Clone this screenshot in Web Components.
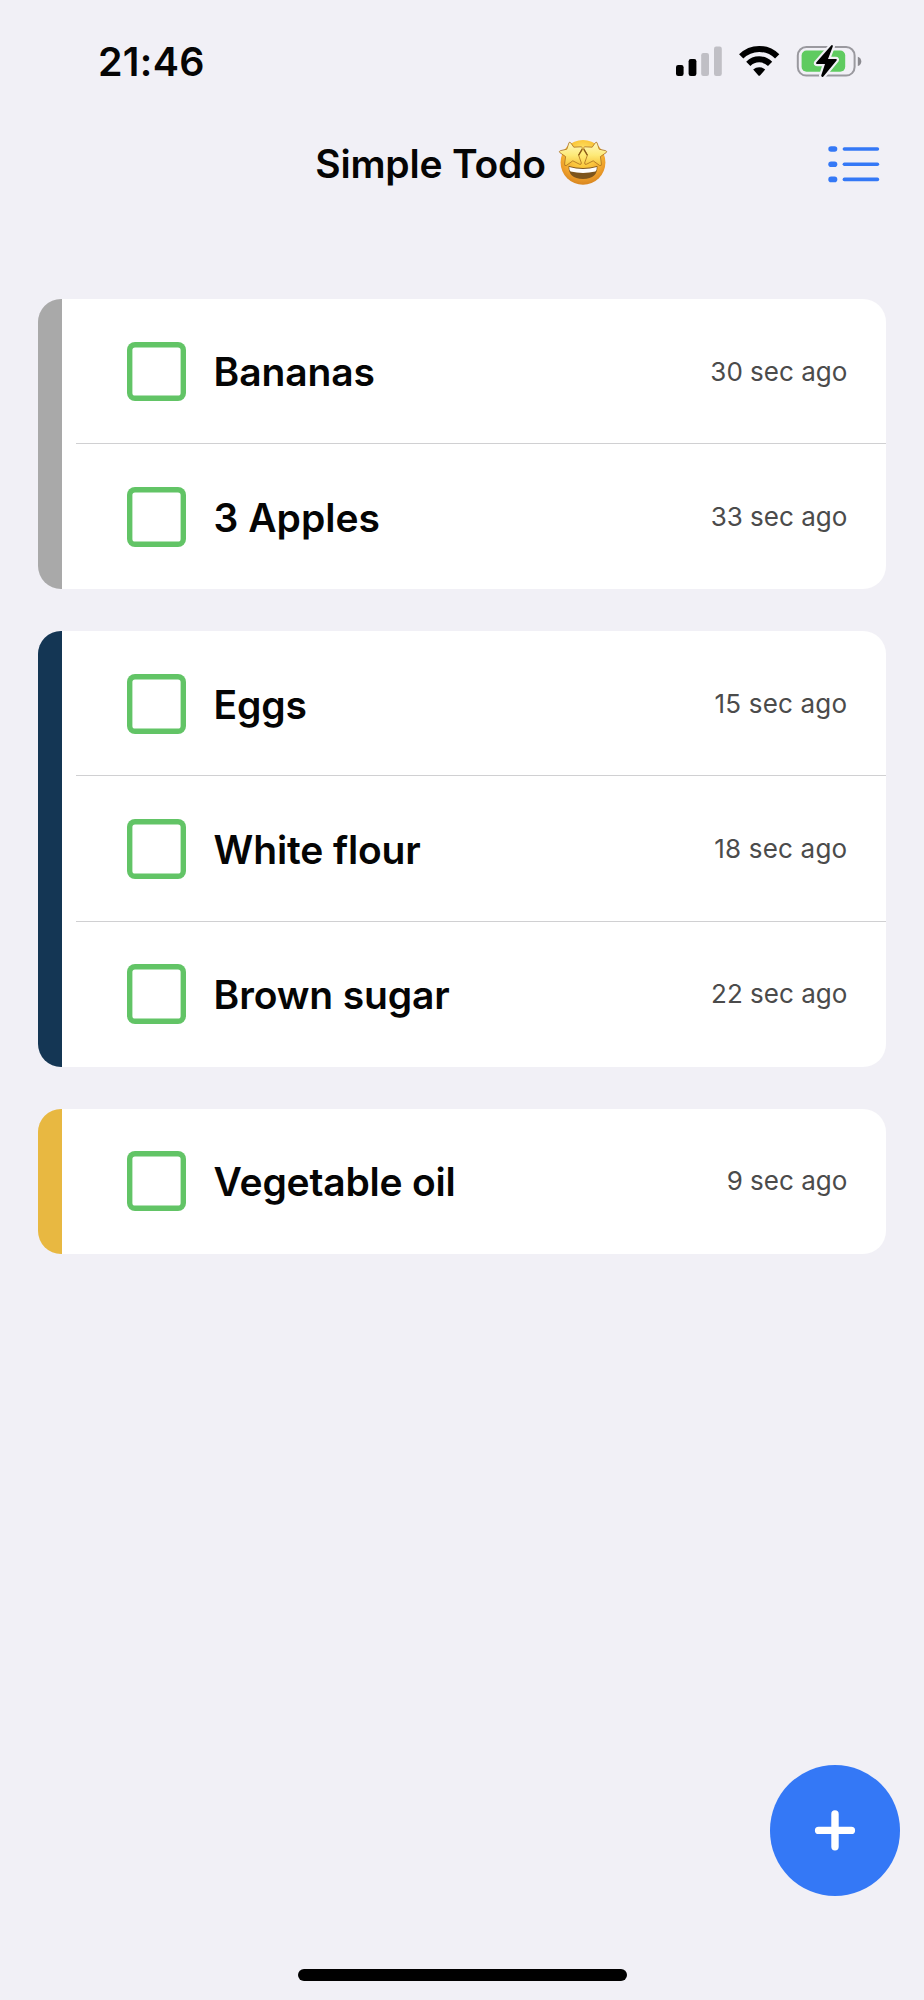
<!DOCTYPE html>
<html lang="en">
<head>
<meta charset="utf-8">
<title>Simple Todo</title>
<style>
html,body{margin:0;background:#f1f0f6;}
</style>
</head>
<body>
<todo-app></todo-app>
<script>
const define=(name,html)=>{
  const t=document.createElement('template');t.innerHTML=html;
  customElements.define(name,class extends HTMLElement{
    constructor(){super();this.attachShadow({mode:'open'}).append(t.content.cloneNode(true));}
  });
};

define('status-bar',`
<style>
:host{display:flex;box-sizing:border-box;height:124px;padding:37px 60px 0 98px;justify-content:space-between;align-items:flex-start}
.clock{font-size:39.4px;line-height:50px;font-weight:600;letter-spacing:.3px}
svg{display:block}
</style>
<span class="clock"><slot></slot></span>
<svg width="190" height="50" viewBox="674 37 190 50" aria-hidden="true">
  <rect x="676" y="65" width="7.6" height="11" rx="2.2"/>
  <rect x="688.6" y="59" width="7.8" height="17" rx="2.2"/>
  <rect x="701.2" y="53" width="7.8" height="23" rx="2.2" fill="#c0bfc5"/>
  <rect x="714" y="46.5" width="7.8" height="29.5" rx="2.2" fill="#c0bfc5"/>
  <g fill="none" stroke="#000" stroke-width="6">
    <path d="M741.2 56.4A25.4 25.4 0 0 1 777.2 56.4"/>
    <path d="M748.3 63.8A15.6 15.6 0 0 1 770.1 63.8"/>
  </g>
  <path d="M753.2 69.6A9 9 0 0 1 765.2 69.6L760.2 75.2Q759.2 76.2 758.2 75.2Z"/>
  <rect x="797.8" y="47" width="56.8" height="28.6" rx="8.5" fill="none" stroke="#9a999f" stroke-width="2"/>
  <path d="M857.8 56.7Q861.3 58 861.3 61.4T857.8 66.1Z" fill="#8b8a90"/>
  <rect x="801.6" y="50.6" width="43.6" height="21.2" rx="5" fill="#5fcb60"/>
  <path d="M831.4 45.2L816.2 62.6Q815.4 64 817 64H825L821.2 75.6Q821.6 77.8 823.4 76.4L836.6 60.4Q837.4 59 835.8 59H828L832.8 46.4Q832.8 44.4 831.4 45.2Z" stroke="#f1f0f6" stroke-width="4.4" stroke-linejoin="round" paint-order="stroke"/>
</svg>`);

define('star-struck',`
<style>:host{display:block}svg{display:block}</style>
<svg width="50" height="48" viewBox="0 0 50 48" role="img" aria-label="Star-struck">
  <defs>
    <radialGradient id="f" cx=".5" cy=".3" r=".72"><stop offset="0" stop-color="#fff07c"/><stop offset=".4" stop-color="#fbc93e"/><stop offset=".75" stop-color="#ee9f2a"/><stop offset="1" stop-color="#d5821f"/></radialGradient>
    <linearGradient id="s" x1="0" y1="0" x2="0" y2="1"><stop offset="0" stop-color="#fff8c0"/><stop offset=".55" stop-color="#fdea78"/><stop offset="1" stop-color="#f7c236"/></linearGradient>
  </defs>
  <circle cx="25" cy="24.4" r="22.4" fill="url(#f)"/>
  <g fill="url(#s)" stroke="#a86d20" stroke-width=".8" stroke-linejoin="round">
    <path d="M11 4.6Q12 3.6 12.8 4.9L15.8 9.2L23.2 8.8Q25 9.4 24 11.1L20.6 17.2L23.4 25Q23.4 27 21.4 26.2L14.8 22.8L8.2 27.6Q6.2 28 6.6 25.9L7.6 18.6L1.8 14.6Q.6 13.4 2.3 12.7L8.8 11.2Z"/>
    <path d="M39 4.6Q38 3.6 37.2 4.9L34.2 9.2L26.8 8.8Q25 9.4 26 11.1L29.4 17.2L26.6 25Q26.6 27 28.6 26.2L35.2 22.8L41.8 27.6Q43.8 28 43.4 25.9L42.4 18.6L48.2 14.6Q49.4 13.4 47.7 12.7L41.2 11.2Z"/>
  </g>
  <path d="M20.8 16.8L24 11.6M29.2 16.8L26 11.6" fill="none" stroke="#8a5a18" stroke-width="1.3" stroke-linecap="round"/>
  <path d="M10.6 28Q25 32 39.4 28Q40 40.4 25 41Q10 40.4 10.6 28Z" fill="#7d551c"/>
  <path d="M11.2 29Q25 33 38.8 29Q39 31.8 37.4 33.6Q25 36.4 12.6 33.6Q11 31.8 11.2 29Z" fill="#fff"/>
</svg>`);

define('app-header',`
<style>
:host{display:grid;grid-template-columns:1fr auto 1fr;box-sizing:border-box;height:80px;align-items:center}
h1{grid-column:2;display:flex;align-items:center;margin:0 1px 0 0;font-size:39px;line-height:50px;font-weight:600;letter-spacing:-.2px}
star-struck{margin-left:12px;margin-top:-4px}
button{justify-self:end;margin:0 42.6px 0 0;padding:0;border:0;background:none}
svg{display:block}
</style>
<h1><slot></slot><star-struck></star-struck></h1>
<button aria-label="Lists"><svg width="54" height="40" viewBox="827 144 54 40" fill="#3478f6">
  <g id="r"><rect x="828.3" y="146.2" width="9" height="5.6" rx="2.8"/><rect x="842.6" y="147.2" width="36.6" height="3.6" rx="1.8"/></g>
  <use href="#r" y="15.2"/><use href="#r" y="30.4"/>
</svg></button>`);

define('todo-item',`
<style>
:host{display:flex;align-items:center;box-sizing:border-box;height:145.15px;padding:1px 38.7px 0 51px;margin-left:14px;border-bottom:1px solid #d0d0d2}
:host(:last-child){border-bottom-color:transparent}
.box{flex:none;width:59.6px;height:59.6px;box-shadow:inset 0 0 0 5.4px #62c466;border-radius:8px}
.name{flex:1;margin-left:27.5px;padding-top:1.6px;font-size:39px;line-height:50px;font-weight:600;letter-spacing:var(--name-spacing,-.14px)}
.time{padding-top:.4px;font-size:26px;line-height:34px;color:#4b4b4b;letter-spacing:var(--time-spacing,0)}
</style>
<span class="box" role="checkbox" aria-checked="false"></span>
<span class="name"><slot></slot></span>
<span class="time"><slot name="time"></slot></span>`);

define('todo-group',`
<style>
:host{display:block;box-sizing:border-box;background:linear-gradient(to right,var(--accent) 23.5px,#fff 23.5px);border-radius:23px;overflow:hidden;padding-left:23.5px}
</style><slot></slot>`);

define('add-button',`
<style>
:host{display:block;width:130.4px;height:130.4px}
button{display:block;width:100%;height:100%;padding:0;border:0;border-radius:50%;background:#3478f6}
svg{display:block;width:100%;height:100%}
</style>
<button aria-label="Add"><svg viewBox="0 0 130.4 130.4"><path d="M65 49V81.8M48.6 65.4H81.4" stroke="#fff" stroke-width="7.4" stroke-linecap="round"/></svg></button>`);

define('todo-app',`
<style>
:host{display:flex;flex-direction:column;box-sizing:border-box;height:2000px;position:relative;overflow:hidden;background:#f1f0f6;color:#050505;font-family:Inter,"Liberation Sans",sans-serif}
main{flex:1;display:flex;flex-direction:column;gap:42px;padding:95px 38px 0 38px}
add-button{position:absolute;right:23.8px;bottom:104.2px}
.home{align-self:center;width:329px;height:12px;border-radius:6px;background:#000;margin-bottom:19px}
</style>
<status-bar>21:46</status-bar>
<app-header>Simple Todo</app-header>
<main>
  <todo-group style="--accent:#a9a9a9">
    <todo-item style="--name-spacing:-.1px">Bananas<span slot="time">30 sec ago</span></todo-item>
    <todo-item style="--name-spacing:0">3 Apples<span slot="time">33 sec ago</span></todo-item>
  </todo-group>
  <todo-group style="--accent:#143654">
    <todo-item style="--time-spacing:.2px">Eggs<span slot="time">15 sec ago</span></todo-item>
    <todo-item style="--time-spacing:.2px">White flour<span slot="time">18 sec ago</span></todo-item>
    <todo-item>Brown sugar<span slot="time">22 sec ago</span></todo-item>
  </todo-group>
  <todo-group style="--accent:#e8b841">
    <todo-item style="--name-spacing:-.2px">Vegetable oil<span slot="time">9 sec ago</span></todo-item>
  </todo-group>
</main>
<add-button></add-button>
<div class="home"></div>`);
</script>
</body>
</html>
